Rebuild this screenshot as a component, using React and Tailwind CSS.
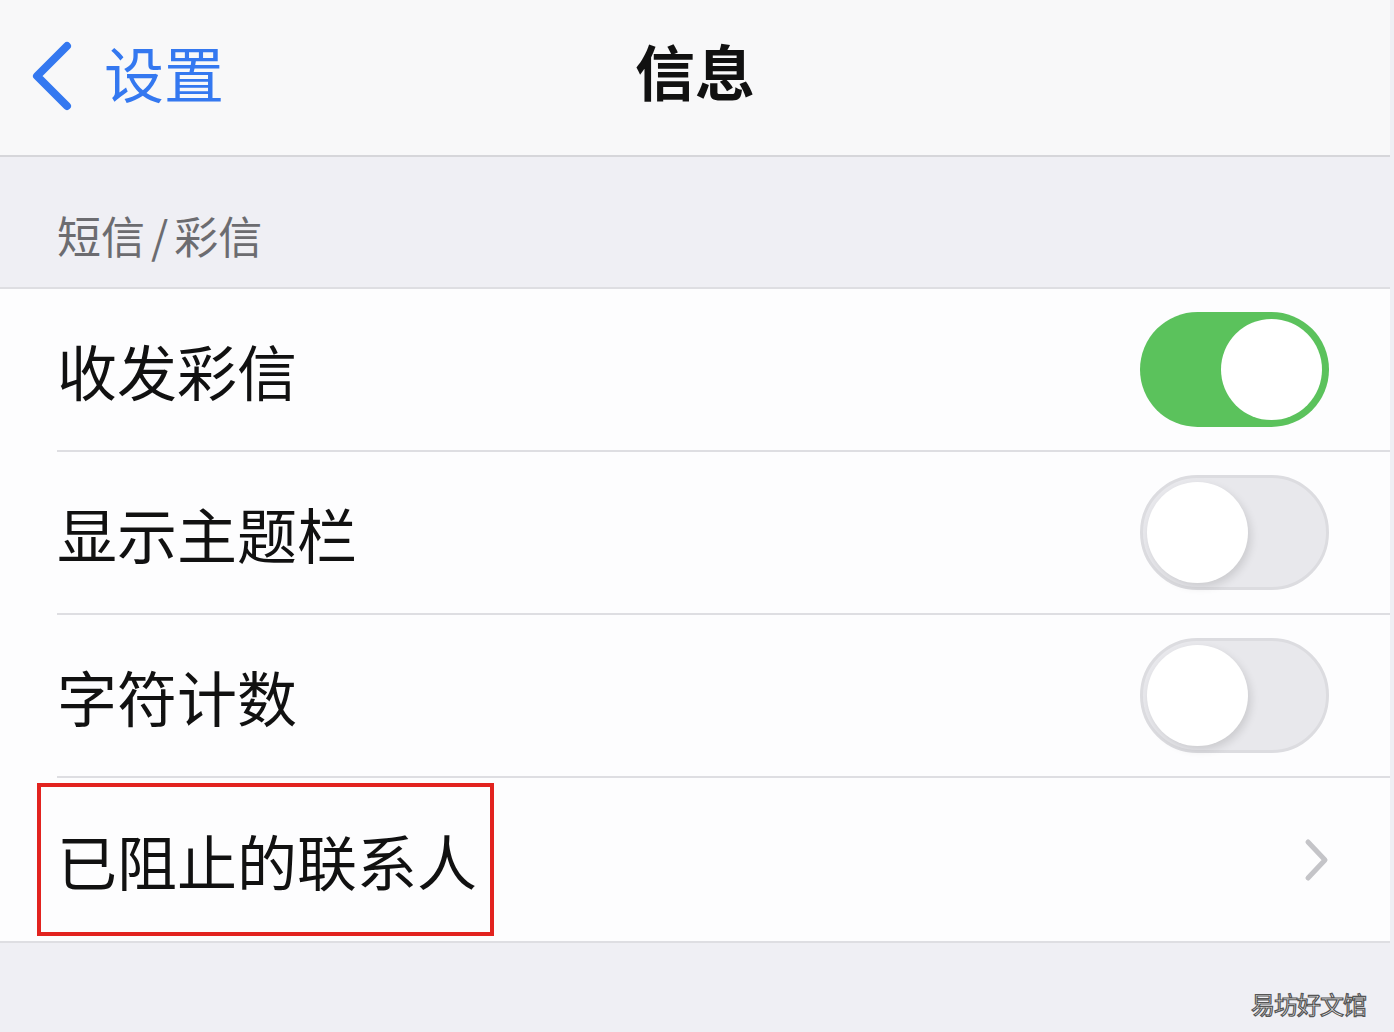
import React from "react";

const font = { fontFamily: '"Noto Sans CJK SC", "Noto Sans", sans-serif' };

const Toggle = ({ on }) =>
  on ? (
    <div className="relative w-[189px] h-[115px] rounded-full bg-[#5bc25c]">
      <div className="absolute right-[7px] top-[7px] w-[101px] h-[101px] rounded-full bg-white" />
    </div>
  ) : (
    <div className="relative w-[189px] h-[115px] rounded-full bg-[#e8e8ec] border-[3px] border-[#dcdce0]">
      <div className="absolute left-[4px] top-[4px] w-[101px] h-[101px] rounded-full bg-white shadow-[3px_4px_8px_rgba(0,0,0,0.12)]" />
    </div>
  );

const Row = ({ label, children, last }) => (
  <div className="flex h-[163px] pl-[57px]">
    <div
      className={`flex-1 flex items-center justify-between pr-[61px] ${
        last ? "" : "border-b-2 border-[#dedee2]"
      }`}
    >
      <span className="text-[60px] leading-none text-[#111]">{label}</span>
      {children}
    </div>
  </div>
);

export default function App() {
  return (
    <div className="w-[1394px] h-[1032px] bg-[#efeff4] flex flex-col" style={font}>
      {/* nav bar */}
      <div className="relative shrink-0 h-[157px] bg-[#f8f8f9] border-b-2 border-[#d6d6da] mr-[4px]">
        <div className="absolute left-[30px] top-[40px] flex items-center gap-[30px]">
          <svg width="44" height="72" viewBox="0 0 44 72">
            <path
              d="M37 6 L7 36 L37 66"
              fill="none"
              stroke="#3478f0"
              strokeWidth="8"
              strokeLinecap="round"
              strokeLinejoin="round"
            />
          </svg>
          <span className="text-[60px] leading-none text-[#3478f0] -mt-[8px]">设置</span>
        </div>
        <span className="absolute left-1/2 -translate-x-1/2 top-[40px] text-[60px] leading-none font-bold text-[#111]">
          信息
        </span>
      </div>

      {/* section header */}
      <div className="shrink-0 h-[130px] pt-[56px] pl-[57px]">
        <span className="text-[44px] leading-none text-[#6c6c70]">
          短信<span className="mx-[6px]">/</span>彩信
        </span>
      </div>

      {/* group */}
      <div className="shrink-0 bg-[#fdfdfe] border-y-2 border-[#dedee2] mr-[4px]">
        <Row label="收发彩信">
          <Toggle on />
        </Row>
        <Row label="显示主题栏">
          <Toggle />
        </Row>
        <Row label="字符计数">
          <Toggle />
        </Row>
        <div className="relative">
          <Row label="已阻止的联系人" last>
            <svg width="28" height="44" viewBox="0 0 28 44" className="-mr-[2px]">
              <path
                d="M5 4 L22 22 L5 40"
                fill="none"
                stroke="#c4c4c8"
                strokeWidth="5"
                strokeLinecap="round"
                strokeLinejoin="round"
              />
            </svg>
          </Row>
          <div className="absolute left-[37px] top-[5px] w-[457px] h-[153px] border-[4px] border-[#e2231f]" />
        </div>
      </div>

      {/* watermark */}
      <div className="flex-1 flex items-end justify-end pr-[28px] pb-[16px]">
        <span className="text-[24px] leading-none text-white tracking-[-1px] [-webkit-text-stroke:1.2px_#555]">
          易坊好文馆
        </span>
      </div>
    </div>
  );
}
